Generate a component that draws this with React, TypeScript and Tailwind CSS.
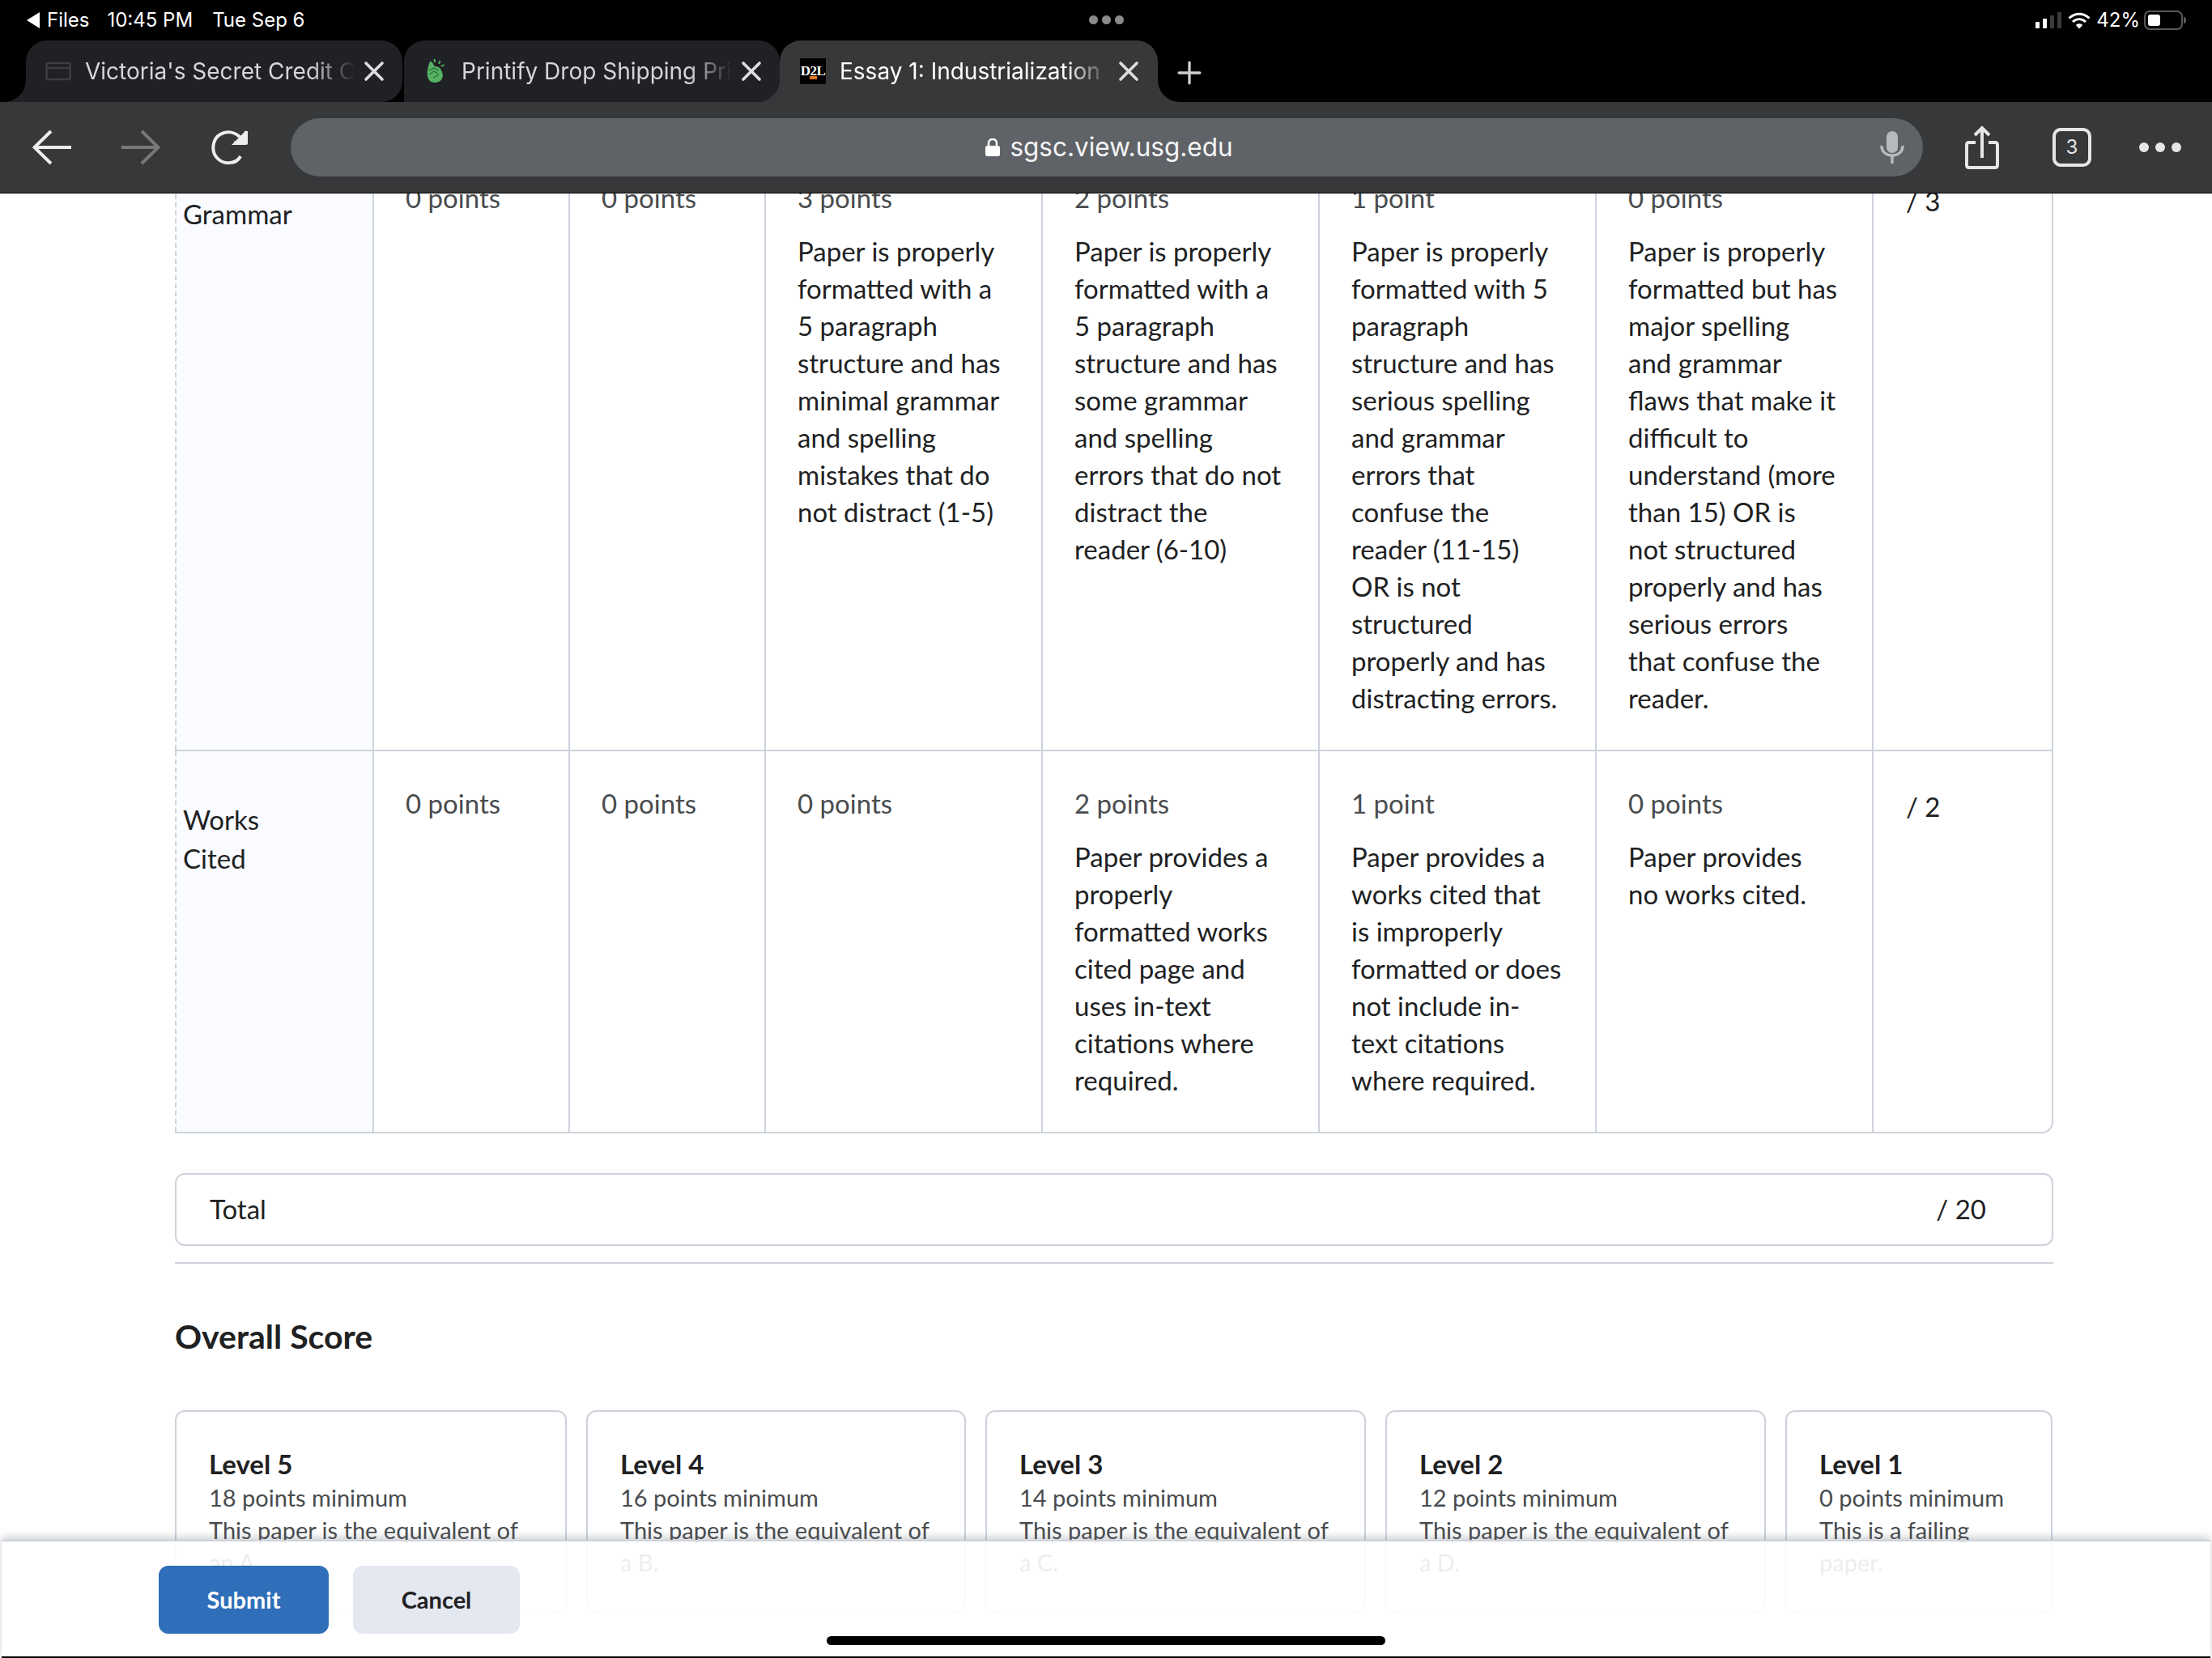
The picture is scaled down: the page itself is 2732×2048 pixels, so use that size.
import { X, Plus } from "lucide-react";

type Cell = { points: string; text?: string };
type Row = { label: string[]; cells: Cell[]; score: string };

const rows: Row[] = [
  {
    label: ["Grammar"],
    score: "/ 3",
    cells: [
      { points: "0 points" },
      { points: "0 points" },
      {
        points: "3 points",
        text: "Paper is properly formatted with a 5 paragraph structure and has minimal grammar and spelling mistakes that do not distract (1-5)",
      },
      {
        points: "2 points",
        text: "Paper is properly formatted with a 5 paragraph structure and has some grammar and spelling errors that do not distract the reader (6-10)",
      },
      {
        points: "1 point",
        text: "Paper is properly formatted with 5 paragraph structure and has serious spelling and grammar errors that confuse the reader (11-15) OR is not structured properly and has distracting errors.",
      },
      {
        points: "0 points",
        text: "Paper is properly formatted but has major spelling and grammar flaws that make it difficult to understand (more than 15) OR is not structured properly and has serious errors that confuse the reader.",
      },
    ],
  },
  {
    label: ["Works", "Cited"],
    score: "/ 2",
    cells: [
      { points: "0 points" },
      { points: "0 points" },
      { points: "0 points" },
      {
        points: "2 points",
        text: "Paper provides a properly formatted works cited page and uses in-text citations where required.",
      },
      {
        points: "1 point",
        text: "Paper provides a works cited that is improperly formatted or does not include in-text citations where required.",
      },
      { points: "0 points", text: "Paper provides no works cited." },
    ],
  },
];

const levels = [
  { name: "Level 5", min: "18 points minimum", text: "This paper is the equivalent of an A.", width: "w-[484px]" },
  { name: "Level 4", min: "16 points minimum", text: "This paper is the equivalent of a B.", width: "w-[469px]" },
  { name: "Level 3", min: "14 points minimum", text: "This paper is the equivalent of a C.", width: "w-[470px]" },
  { name: "Level 2", min: "12 points minimum", text: "This paper is the equivalent of a D.", width: "w-[470px]" },
  { name: "Level 1", min: "0 points minimum", text: "This is a failing paper.", width: "w-[330px]" },
];

function Flare({ side, color }: { side: "left" | "right"; color: string }) {
  return (
    <svg
      width="28"
      height="28"
      viewBox="0 0 28 28"
      className={side === "left" ? "absolute bottom-0 -left-[28px]" : "absolute bottom-0 -right-[28px]"}
    >
      <path d={side === "left" ? "M28 0V28H0C16 28 28 16 28 0Z" : "M0 0V28H28C12 28 0 16 0 0Z"} fill={color} />
    </svg>
  );
}

function Tab({
  title,
  icon,
  active,
  className,
}: {
  title: string;
  icon: React.ReactNode;
  active?: boolean;
  className: string;
}) {
  return (
    <div
      className={`relative flex h-[76px] items-center rounded-t-[26px] ${
        active ? "bg-[#37383a] text-white" : "rounded-br-[26px] bg-[#202124] text-[#d5d6d8]"
      } ${className}`}
    >
      {icon}
      <span className="mr-[4px] flex-1 overflow-hidden whitespace-nowrap text-[28px] [mask-image:linear-gradient(to_right,black_84%,transparent_100%)]">
        {title}
      </span>
      <X size={40} strokeWidth={2.2} className="shrink-0 text-[#dcdddf]" />
      {active ? <Flare side="right" color="#37383a" /> : null}
    </div>
  );
}

function TopBars() {
  return (
    <header className="relative z-10 shrink-0 bg-black font-['Inter',sans-serif]">
      <div className="relative flex h-[50px] items-center pl-[33px] pr-[36px] text-[24px] text-white">
        <svg width="16" height="20" viewBox="0 0 16 20" className="mr-[9px]">
          <path d="M16 0V20L0 10Z" fill="#fff" />
        </svg>
        <span>Files</span>
        <span className="ml-[22px]">10:45 PM</span>
        <span className="ml-[24px]">Tue Sep 6</span>
        <div className="absolute left-[1345px] top-[19px] flex gap-[5px]">
          <span className="h-[11px] w-[11px] rounded-full bg-[#8a8a8a]" />
          <span className="h-[11px] w-[11px] rounded-full bg-[#8a8a8a]" />
          <span className="h-[11px] w-[11px] rounded-full bg-[#8a8a8a]" />
        </div>
        <div className="ml-auto flex items-center">
          <svg width="33" height="20" viewBox="0 0 33 20">
            <rect x="0" y="12" width="5" height="8" rx="1" fill="#fff" />
            <rect x="9" y="8" width="5" height="12" rx="1" fill="#fff" />
            <rect x="18" y="4" width="5" height="16" rx="1" fill="#3a3a3a" />
            <rect x="27" y="0" width="5" height="20" rx="1" fill="#3a3a3a" />
          </svg>
          <svg width="28" height="21" viewBox="0 0 28 21" className="ml-[7px]" fill="none" stroke="#fff" strokeWidth="3">
            <path d="M1.5 7.5C9 .5 19 .5 26.5 7.5" />
            <path d="M6 12C11 7.5 17 7.5 22 12" />
            <path d="M14 20.5L9.8 16C12 13.8 16 13.8 18.2 16Z" fill="#fff" stroke="none" />
          </svg>
          <span className="ml-[7px]">42%</span>
          <div className="relative ml-[5px] flex h-[24px] w-[48px] items-center rounded-[7px] border-2 border-[#5a5a5a] p-[3px]">
            <div className="h-full w-[40%] rounded-[3px] bg-white" />
            <span className="absolute -right-[6px] top-[6px] h-[8px] w-[3px] rounded-r-sm bg-[#5a5a5a]" />
          </div>
        </div>
      </div>

      <div className="flex h-[76px] items-end">
        <div className="relative ml-[32px] flex">
          <Flare side="left" color="#202124" />
          <Tab
            title="Victoria's Secret Credit C"
            className="w-[465px] pl-[24px] pr-[15px]"
            icon={
              <svg width="32" height="32" viewBox="0 0 32 32" className="mr-[17px] shrink-0" fill="none" stroke="#3d3e41" strokeWidth="2.5">
                <rect x="1.5" y="6" width="29" height="20" rx="1.5" />
                <path d="M2 12H30" />
              </svg>
            }
          />
        </div>
        <Tab
          title="Printify Drop Shipping Pri"
          className="ml-[2px] w-[464px] pl-[28px] pr-[15px]"
          icon={
            <svg width="24" height="32" viewBox="0 0 24 32" className="mr-[19px] shrink-0">
              <path
                d="M5 4C6.500 4 7 5 8 7L10 10C13 10 17 11 18 15C20 18 20.500 22 19 25C17 29 13 30 10 30C5 30 2 27 1 22C0 17 2 9 4 4Z"
                fill="#55b363"
              />
              <path d="M3 15L9 12L15 15M3 20L9 16L15 20M8 24L14 21" stroke="#2a6b38" strokeWidth="1.200" fill="none" />
              <path d="M10 5L9.500 1M15 7L16.500 3M18 10L21.500 8" stroke="#55b363" strokeWidth="2" />
            </svg>
          }
        />
        <div className="relative">
          <Flare side="left" color="#37383a" />
          <Tab
            active
            title="Essay 1: Industrialization"
            className="w-[467px] pl-[25px] pr-[16px]"
            icon={
              <div className="relative mr-[17px] flex h-[32px] w-[32px] shrink-0 justify-center bg-black pt-[8px] font-['Liberation_Serif',serif] text-[17px] font-bold leading-[16px] tracking-[-0.5px] text-white">
                D2L
                <span className="absolute bottom-[6px] left-[12px] h-[4px] w-[9px] bg-[#e87722]" />
              </div>
            }
          />
        </div>
        <Plus size={44} strokeWidth={1.8} className="mb-[14px] ml-[17px] text-[#cfd0d2]" />
      </div>

      <div className="flex h-[113px] items-center border-b border-black bg-[#37383a] pl-[40px] pr-[38px]">
        <svg width="48" height="44" viewBox="0 0 48 44" fill="none" stroke="#ededee" strokeWidth="4">
          <path d="M23 2L2.5 22L23 42M3 22H48" />
        </svg>
        <svg width="48" height="44" viewBox="0 0 48 44" fill="none" stroke="#77787a" strokeWidth="4" className="ml-[62px]">
          <path d="M25 2L45.5 22L25 42M45 22H0" />
        </svg>
        <svg width="46" height="44" viewBox="0 0 46 44" fill="none" stroke="#ededee" strokeWidth="4" className="ml-[63px]">
          <path d="M36 33C31 43 15 44 7 35C-1 26 2 11 11 6C20 1 30 3 38 12" />
          <path d="M43 1V19H25" fill="#ededee" stroke="none" />
          <path d="M43 2V16.500H28" />
        </svg>
        <div className="relative ml-[52px] flex h-[72px] flex-1 items-center justify-center rounded-full bg-[#5f6267] pl-[6px] text-[31.5px] leading-none text-[#f4f5f6]">
          <svg width="18" height="22" viewBox="0 0 18 22" className="mr-[12px]">
            <path d="M4 10V6C4 3 6 1 9 1C12 1 14 3 14 6V10" fill="none" stroke="#fff" strokeWidth="2.500" />
            <rect x="0" y="9" width="18" height="13" rx="2.500" fill="#fff" />
          </svg>
          sgsc.view.usg.edu
          <svg width="30" height="40" viewBox="0 0 30 40" className="absolute right-[23px] top-[16px]">
            <rect x="8" y="0" width="14" height="27" rx="7" fill="#b7babd" />
            <path d="M2 18C2 26 8 30 15 30C22 30 28 26 28 18" fill="none" stroke="#b7babd" strokeWidth="3.500" />
            <path d="M15 30V40" stroke="#b7babd" strokeWidth="3.500" />
          </svg>
        </div>
        <svg width="42" height="54" viewBox="0 0 42 54" fill="none" stroke="#e5e6e8" strokeWidth="4" className="ml-[52px]">
          <path d="M13 21H5C3 21 2 22 2 24V49C2 51 3 52 5 52H37C39 52 40 51 40 49V24C40 22 39 21 37 21H29" />
          <path d="M21 40V4M12 12L21 3L30 12" />
        </svg>
        <div className="ml-[66px] flex h-[48px] w-[48px] items-center justify-center rounded-[10px] border-4 border-[#e5e6e8] text-[24px] text-[#e5e6e8]">
          3
        </div>
        <div className="ml-[59px] flex gap-[8px]">
          <span className="h-[12px] w-[12px] rounded-full bg-[#e5e6e8]" />
          <span className="h-[12px] w-[12px] rounded-full bg-[#e5e6e8]" />
          <span className="h-[12px] w-[12px] rounded-full bg-[#e5e6e8]" />
        </div>
      </div>
    </header>
  );
}

function Rubric() {
  return (
    <div className="-mt-[59px] grid grid-cols-[244px_242px_242px_342px_342px_342px_342px_222px] overflow-hidden rounded-br-[14px] border-r-2 border-b-2 border-[#cdd3dc] text-[33px] leading-[46px]">
      {rows.map((row, rowIndex) => {
        const bottom = rowIndex === 0 ? "border-b-2" : "";
        return (
          <div key={row.score} className="contents">
            <div className={`relative bg-[#f9fbff] pl-[10px] pt-[60px] leading-[48px] text-[#202122] ${bottom} border-[#cdd3dc]`}>
              <span className="absolute inset-y-0 left-0 border-l-2 border-dashed border-[#cdd3dc]" />
              {row.label.map((line) => (
                <div key={line}>{line}</div>
              ))}
            </div>
            {row.cells.map((cell, i) => (
              <div key={i} className={`border-l-2 border-[#cdd3dc] pl-[39px] pt-[41px] pb-[41px] ${bottom}`}>
                <div className="mb-[20px] text-[#494c4e]">{cell.points}</div>
                {cell.text ? <p className="max-w-[260px] text-[#202122]">{cell.text}</p> : null}
              </div>
            ))}
            <div className={`border-l-2 border-[#cdd3dc] pl-[40px] pt-[45px] text-[#202122] ${bottom}`}>{row.score}</div>
          </div>
        );
      })}
    </div>
  );
}

function Footer() {
  return (
    <footer className="absolute bottom-0 left-[2px] right-[2px] z-10 h-[146px] border-t-2 border-b-2 border-t-[#cdd3dc] border-b-black bg-white/90 shadow-[0_-3px_10px_rgba(80,90,100,0.3)]">
      <div className="flex gap-[30px] pl-[194px] pt-[30px]">
        <button className="h-[84px] w-[210px] rounded-[12px] bg-[#2f6eb8] text-[29px] font-bold text-white">Submit</button>
        <button className="h-[84px] w-[206px] rounded-[12px] bg-[#e3e8f1] text-[29px] font-bold text-[#202122]">Cancel</button>
      </div>
      <div className="absolute bottom-[14px] left-[1019px] h-[11px] w-[690px] rounded-full bg-black" />
    </footer>
  );
}

export default function App() {
  return (
    <div className="relative flex h-[2048px] w-[2732px] flex-col overflow-hidden bg-white font-['Lato',sans-serif]">
      <TopBars />
      <main className="flex-1 overflow-hidden pl-[216px] pr-[196px]">
        <Rubric />
        <div className="mt-[49px] flex h-[90px] items-center justify-between rounded-[12px] border-2 border-[#cdd3dc] pl-[41px] pr-[81px] text-[33px] text-[#202122]">
          <span>Total</span>
          <span>/ 20</span>
        </div>
        <hr className="mt-[20px] border-t-2 border-[#cdd3dc]" />
        <h2 className="mt-[62px] text-[41px] font-bold leading-[56px] text-[#202122]">Overall Score</h2>
        <div className="mt-[63px] flex gap-[24px]">
          {levels.map((level) => (
            <div key={level.name} className={`h-[251px] shrink-0 rounded-[12px] border-2 border-[#cdd3dc] pl-[40px] pr-[34px] pt-[43px] ${level.width}`}>
              <h3 className="text-[33px] font-bold leading-[43px] text-[#202122]">{level.name}</h3>
              <p className="text-[29px] leading-[40px] text-[#494c4e]">{level.min}</p>
              <p className="text-[29px] leading-[40px] text-[#494c4e]">{level.text}</p>
            </div>
          ))}
        </div>
      </main>
      <Footer />
    </div>
  );
}
